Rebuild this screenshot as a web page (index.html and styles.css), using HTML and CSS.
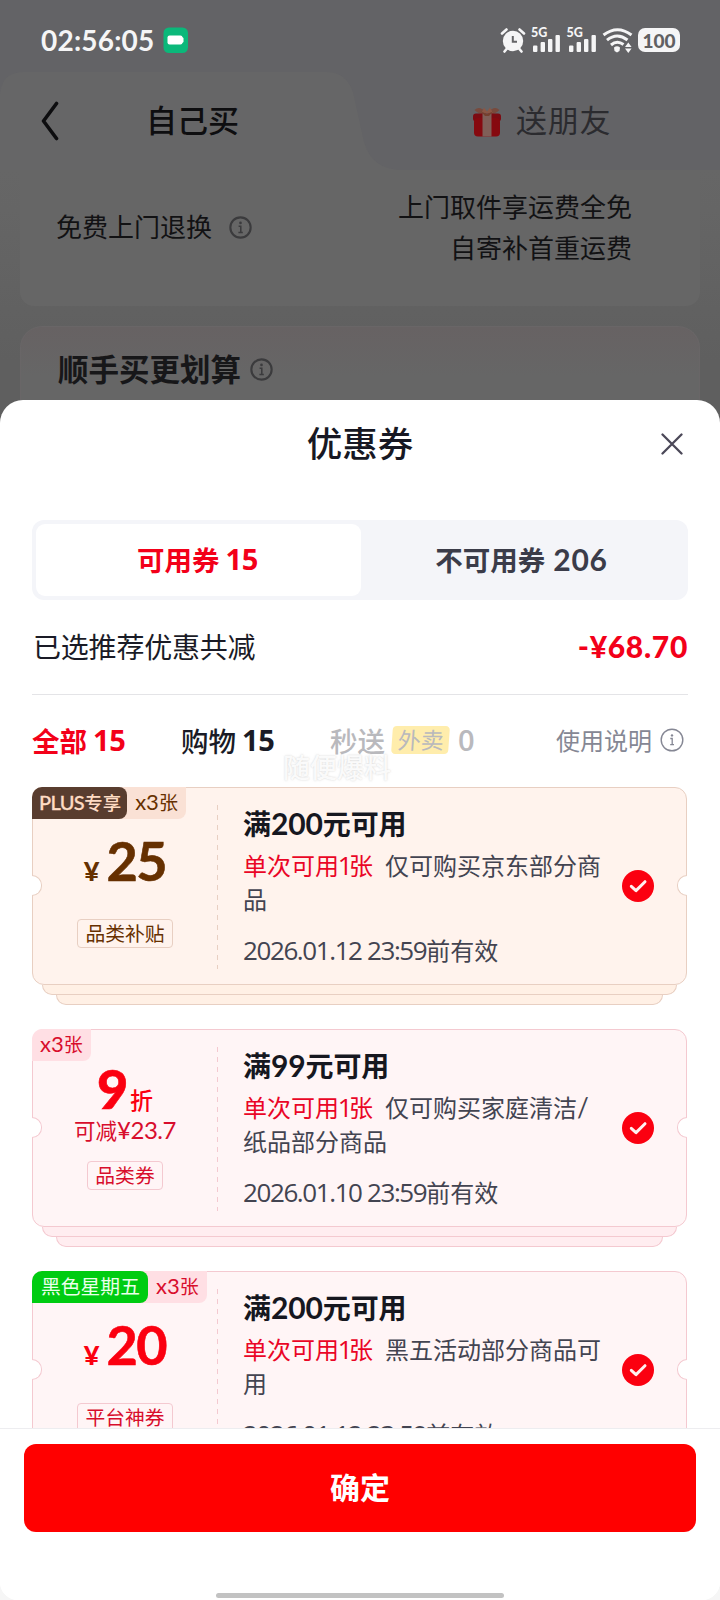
FILE: index.html
```html
<!DOCTYPE html>
<html lang="zh-CN">
<head>
<meta charset="utf-8">
<title>优惠券</title>
<link rel="stylesheet" href="styles.css">
</head>
<body>
<svg class="defs" width="0" height="0">
  <symbol id="info" viewBox="0 0 24 24"><circle cx="12" cy="12" r="10.8" fill="none" stroke="currentColor" stroke-width="1.4"/><circle cx="12" cy="7.4" r="1.2" fill="currentColor"/><path d="M10.3 10.5H12.2V16.4M10.2 16.6H14" fill="none" stroke="currentColor" stroke-width="1.3"/></symbol>
  <symbol id="info-bold" viewBox="0 0 24 24"><circle cx="12" cy="12" r="10.6" fill="none" stroke="currentColor" stroke-width="2.2"/><circle cx="12" cy="7.2" r="1.4" fill="currentColor"/><path d="M10 10.8H12.3V17M9.8 17.2H14.4" fill="none" stroke="currentColor" stroke-width="1.6"/></symbol>
  <symbol id="signal" viewBox="0 0 28 26"><g fill="currentColor"><rect x="1" y="18.5" width="4.4" height="6.5" rx="1"/><rect x="8.6" y="15" width="4.4" height="10" rx="1"/><rect x="16" y="12" width="4.4" height="13" rx="1"/><rect x="23.5" y="8" width="4.4" height="17" rx="1"/></g></symbol>
  <symbol id="check" viewBox="0 0 32 32"><circle cx="16" cy="16" r="16" fill="#fb0010"/><path d="M9.3 16.3L14 20.6L23 11.7" fill="none" stroke="#fff0f0" stroke-width="3" stroke-linecap="round" stroke-linejoin="round"/></symbol>
</svg>
<div class="phone">
  <div class="backdrop">
    <div class="status">
      <span class="n clock">02:56:05</span>
      <svg class="rec" width="26" height="27" viewBox="0 0 26 27"><rect x=".5" y=".5" width="24.5" height="25.5" rx="5.5" fill="#0bb87a"/><rect x="4.5" y="8.5" width="15" height="9" rx="2" fill="#fff"/><path d="M19 10l1.5 1v4L19 16z" fill="#fff"/></svg>
      <span class="spacer"></span>
      <svg class="alarm" width="26" height="26" viewBox="0 0 26 26"><circle cx="13" cy="14" r="10.2" fill="currentColor"/><path d="M2 6.5L6.5 2.5M19.5 2.5L24 6.5M4.5 24.5L7 21.5M19 21.5L21.5 24.5" fill="none" stroke="currentColor" stroke-width="2.6" stroke-linecap="round"/><path d="M12.8 9V14.8H17" fill="none" stroke="#646467" stroke-width="2"/></svg>
      <span class="net"><span class="n net-label">5G</span><svg width="28" height="26"><use href="#signal"/></svg></span>
      <span class="net"><span class="n net-label">5G</span><svg width="28" height="26"><use href="#signal"/></svg></span>
      <svg class="wifi" width="31" height="26" viewBox="0 0 31 26"><g fill="none" stroke="currentColor" stroke-width="3"><path d="M1.5 8Q15.5-2.5 29.5 8"/><path d="M5 13.2Q15 5 25.5 13"/><path d="M9 18Q15 12.8 21.5 17.5"/></g><path d="M12 20.5Q15 18 18 20.5L17.5 24L15 25.5L12.5 24Z" fill="currentColor"/><path d="M26.3 15.5L29.6 20H23Z M23 21.5H29.6L26.3 26Z" fill="currentColor"/></svg>
      <span class="battery"><span class="n">100</span></span>
    </div>
    <div class="tabs">
      <svg class="tab-shape" width="720" height="98" viewBox="0 0 720 98"><path d="M0 98V22Q2 0 24 0H326Q346 0 353 20L364 70Q372 98 402 98Z" fill="#666667"/></svg>
      <svg class="back" width="18" height="40" viewBox="0 0 18 40"><path d="M15.5 2.5L2.5 20L15.5 37.5" fill="none" stroke="#0d0d0f" stroke-width="3.6" stroke-linecap="round" stroke-linejoin="round"/></svg>
      <span class="tab-self">自己买</span>
      <svg class="gift" width="30" height="31" viewBox="0 0 30 31"><path d="M14 9Q6 8 2.5 4Q8-1 14 7ZM16 9Q24 8 27.500 4Q22-1 16 7Z" fill="#784a3d"/><path d="M9.500 7L12 1.500L15 5.500L18 1.500L21 7Z" fill="#8b5745"/><rect x="1" y="7.500" width="28" height="8" rx="3" fill="#7c0b12"/><rect x="2" y="12" width="26" height="18.500" rx="4" fill="#86090f"/><rect x="10.500" y="7.500" width="9" height="23" fill="#805f58"/><path d="M9 5.500L15 8L21 5.500L17 10H13Z" fill="#74402f"/></svg>
      <span class="tab-friend">送朋友</span>
    </div>
    <div class="page">
      <div class="ship">
        <span class="ship-label">免费上门退换</span>
        <svg class="info-dim" width="23" height="23"><use href="#info-bold"/></svg>
        <div class="ship-note">上门取件享运费全免<br>自寄补首重运费</div>
      </div>
      <div class="deal"><span class="deal-label">顺手买更划算</span><svg class="info-dim" width="23" height="23"><use href="#info-bold"/></svg></div>
    </div>
  </div>

  <div class="sheet">
    <header class="sheet-head">
      <h1>优惠券</h1>
      <svg class="close" width="22" height="22" viewBox="0 0 22 22"><path d="M1.5 1.5L20.5 20.5M20.5 1.5L1.5 20.5" stroke="#4b4858" stroke-width="2.3" stroke-linecap="round"/></svg>
    </header>
    <div class="segment">
      <div class="seg on">可用券<span class="n">15</span></div>
      <div class="seg">不可用券<span class="n">206</span></div>
    </div>
    <div class="total"><span>已选推荐优惠共减</span><span class="n amount">-¥68.70</span></div>
    <div class="filters">
      <span class="filter f-all">全部<span class="n">15</span></span>
      <span class="filter f-shop">购物<span class="n">15</span></span>
      <span class="filter f-fast">秒送<em>外卖</em><span class="n">0</span></span>
      <span class="help">使用说明</span>
      <svg class="help-icon" width="24" height="24"><use href="#info"/></svg>
      <span class="watermark">随便爆料</span>
    </div>
    <div class="list">
      <article class="coupon plus">
        <div class="card">
          <div class="badges"><span class="badge main"><span class="n">PLUS</span>专享</span><span class="badge count"><span class="n">x3</span>张</span></div>
          <div class="left">
            <div class="price"><span class="n yen">¥</span><span class="n num">25</span></div>
            <span class="tag">品类补贴</span>
          </div>
          <div class="body">
            <h2>满<span class="n">200</span>元可用</h2>
            <p><b>单次可用<span class="n one">1</span>张</b>仅可购买京东部分商品</p>
            <div class="date"><span class="n">2026.01.12 23:59</span>前有效</div>
          </div>
          <svg class="check" width="32" height="32"><use href="#check"/></svg>
          <i class="notch l"></i><i class="notch r"></i>
        </div>
        <div class="stack s1"></div><div class="stack s2"></div>
      </article>
      <article class="coupon">
        <div class="card">
          <div class="badges"><span class="badge count"><span class="n">x3</span>张</span></div>
          <div class="left rate">
            <div class="price"><span class="n num">9</span><span class="unit">折</span></div>
            <div class="save">可减<span class="n">¥23.7</span></div>
            <span class="tag">品类券</span>
          </div>
          <div class="body">
            <h2>满<span class="n">99</span>元可用</h2>
            <p><b>单次可用<span class="n one">1</span>张</b>仅可购买家庭清洁<span class="n">/</span><br>纸品部分商品</p>
            <div class="date"><span class="n">2026.01.10 23:59</span>前有效</div>
          </div>
          <svg class="check" width="32" height="32"><use href="#check"/></svg>
          <i class="notch l"></i><i class="notch r"></i>
        </div>
        <div class="stack s1"></div><div class="stack s2"></div>
      </article>
      <article class="coupon">
        <div class="card">
          <div class="badges"><span class="badge main green">黑色星期五</span><span class="badge count"><span class="n">x3</span>张</span></div>
          <div class="left">
            <div class="price"><span class="n yen">¥</span><span class="n num">20</span></div>
            <span class="tag">平台神券</span>
          </div>
          <div class="body">
            <h2>满<span class="n">200</span>元可用</h2>
            <p><b>单次可用<span class="n one">1</span>张</b>黑五活动部分商品可用</p>
            <div class="date"><span class="n">2026.01.12 23:59</span>前有效</div>
          </div>
          <svg class="check" width="32" height="32"><use href="#check"/></svg>
          <i class="notch l"></i><i class="notch r"></i>
        </div>
        <div class="stack s1"></div><div class="stack s2"></div>
      </article>
    </div>
    <footer class="foot">
      <button class="confirm">确定</button>
      <div class="home"></div>
    </footer>
  </div>
</div>
</body>
</html>
```
FILE: styles.css
```css
* { box-sizing: border-box; margin: 0; padding: 0; }
body { background: #666; font-family: "Noto Sans CJK SC", sans-serif; color: #1a1b26; }
.defs { position: absolute; }
.phone { width: 720px; height: 1600px; overflow: hidden; display: flex; flex-direction: column; background: linear-gradient(#5f5f5f 1000px, #f6f6f6 1000px); }
.n { font-family: Lato, "Liberation Sans", sans-serif; line-height: 1; }
svg { flex: none; display: block; }

.backdrop { height: 400px; flex: none; background: #636366; }
.status { height: 72px; padding: 8px 40px 0 41px; display: flex; align-items: center; color: #f5f5f6; }
.clock { font-size: 28px; font-weight: 700; letter-spacing: 0.2px; width: 122px; white-space: nowrap; }
.spacer { flex: 1; }
.alarm { margin-right: 6px; }
.net { position: relative; margin-right: 7.5px; }
.net-label { position: absolute; left: -1px; top: 0; font-size: 12.5px; font-weight: 900; }
.wifi { margin: 0 5px 0 -1px; }
.battery { width: 42px; height: 24px; border-radius: 7px; background: #f5f5f6; color: #606062; display: flex; align-items: center; justify-content: center; font-size: 19px; font-weight: 900; }

.tabs { position: relative; height: 98px; display: flex; align-items: center; color: #0e0e10; font-size: 31px; font-weight: 500; }
.tab-shape { position: absolute; left: 0; top: 0; }
.back { position: relative; margin-left: 41px; }
.tab-self { position: relative; margin: 0 0 6px 87px; width: 324px; }
.gift { margin-right: 14px; margin-left: 2px; }
.tab-friend { color: #2b2b2f; font-weight: 400; letter-spacing: .8px; margin-bottom: 6px; }

.page { height: 230px; padding: 0 20px; background: linear-gradient(#666, #656565 40px, #5f5f5f 190px); }
.ship { height: 136px; border-radius: 0 0 14px 14px; background: #666; display: flex; padding: 15px 68px 0 36px; font-size: 26px; color: #121214; }
.ship-label { margin-top: 21px; line-height: 40px; }
.ship .info-dim { margin: 31px 0 0 17px; }
.info-dim { color: #3b3b3d; }
.ship-note { margin-left: auto; text-align: right; line-height: 41px; }
.deal { margin-top: 20px; height: 74px; border-radius: 22px 22px 0 0; border: 1px solid #696667; border-bottom: 0; background: linear-gradient(#676263, #666 48px); padding: 12px 37px 0; display: flex; align-items: center; font-size: 30.5px; font-weight: 700; color: #171719; }
.deal-label { margin-bottom: 4px; }
.deal .info-dim { margin-left: 9px; }

.sheet { flex: 1; min-height: 0; background: #fff; border-radius: 23px 23px 18px 18px; display: flex; flex-direction: column; }
.sheet-head { height: 120px; flex: none; display: flex; justify-content: flex-end; padding: 33px 37px 0; }
h1 { flex: 1; margin-left: 22px; margin-top: -14px; line-height: 46px; font-size: 35.5px; font-weight: 500; text-align: center; color: #171823; }
.segment { margin: 0 32px; height: 80px; flex: none; padding: 4px; background: #f4f5f9; border-radius: 12px; display: grid; grid-template-columns: 325px 1fr; }
.seg { display: flex; justify-content: center; align-items: center; font-size: 27.5px; line-height: 40px; font-weight: 700; color: #3b3c49; border-radius: 9px; padding: 0 2px 3px 0; }
.seg .n { font-size: 30px; font-weight: 700; margin-left: 8px; letter-spacing: 0.7px; line-height: 30px; }
.seg.on { background: #fff; color: #f30019; }
.seg.on .n, .filter .n { font-family: "Open Sans", "Noto Sans", sans-serif; font-size: 29px; letter-spacing: -0.4px; margin-left: 6px; }
.total { margin: 0 32px; height: 95px; flex: none; border-bottom: 1px solid #e4e4e7; display: flex; align-items: center; justify-content: space-between; font-size: 28px; padding: 0 0 3px 1px; letter-spacing: -0.2px; }
.amount { color: #f30019; font-size: 30px; font-weight: 900; letter-spacing: 0.7px; }
.filters { height: 92px; flex: none; margin: 0 32px; display: flex; align-items: center; font-size: 27.5px; font-weight: 500; position: relative; padding-bottom: 3px; }
.filter { display: flex; align-items: center; white-space: nowrap; }
.filter .n { font-weight: 700; }
.f-all { color: #f30019; width: 149px; font-weight: 700; }
.f-shop { width: 149px; }
.f-fast { color: #b9b9bd; }
.f-fast em { font-style: normal; font-size: 23px; font-weight: 400; height: 28px; line-height: 26px; padding: 0 5px 0 6px; margin-left: 7px; border-radius: 4px; background: #ffedac; transform: skewX(-4deg); }
.filter em + .n { margin-left: 9px; font-weight: 600; }
.help { margin-left: auto; font-size: 24px; font-weight: 400; color: #858794; }
.help-icon { margin: 1px 4px 0 8px; color: #858794; }
.watermark { position: absolute; left: 251px; top: 52px; font-size: 27px; line-height: 40px; color: #ffffffe0; text-shadow: 0 0 2px #aaa8; }

.list { flex: 1; min-height: 0; overflow: hidden; padding: 0 32px; }
.coupon { --line: #f4c9d0; --bg: #fff5f6; --stack: #ffedf0; --ink: #fb0010; --soft: #d80d2c; height: 242px; width: 655px; }
.coupon.plus { --line: #e8cfc2; --bg: #fff3ed; --stack: #fff0e5; --ink: #663000; --soft: #663000; }
.card { height: 198px; border: 1px solid var(--line); border-radius: 12px; background: var(--bg); position: relative; display: flex; }
.badges { position: absolute; left: -1px; top: -1px; display: flex; height: 32px; font-size: 20px; line-height: 30px; white-space: nowrap; border-radius: 10px 0 8px 0; overflow: hidden; background: #ffdfe4; color: var(--soft); }
.plus .badges { background: #fae1d5; }
.badge { padding: 0 8px; font-size: 19px; }
.badge .n { font-size: 22px; }
.badge.main { background: #593d2f; color: #ffdcc4; border-radius: 0 8px 8px 0; font-weight: 500; font-size: 18.5px; padding: 0 6px 0 7px; }
.badge.main .n { font-size: 20px; letter-spacing: -0.6px; -webkit-text-stroke: .3px currentColor; }
.badge.main.green { background: #0c1; color: #eaffea; font-weight: 400; font-size: 19.8px; padding: 0 8px 0 9px; }
.left { width: 186px; flex: none; display: flex; flex-direction: column; align-items: center; padding: 43px 2px 0 0; position: relative; }
.left::after { content: ""; position: absolute; right: 1px; top: 17px; height: 164px; width: 1px; background: repeating-linear-gradient(var(--line) 0 5px, transparent 5px 10px); }
.price { height: 60px; display: flex; align-items: baseline; color: var(--ink); white-space: nowrap; }
.price .num { font-size: 54px; line-height: 60px; font-weight: 700; letter-spacing: -1.5px; -webkit-text-stroke: .6px currentColor; }
.price .yen { font-size: 27px; font-weight: 900; margin-right: 7px; }
.tag { margin-top: 28px; height: 29px; line-height: 25px; border: 1px solid var(--line); border-radius: 4px; padding: 0 7px; font-size: 19.8px; color: var(--soft); white-space: nowrap; }
.left.rate { padding-top: 29px; }
.rate .num { font-weight: 900; }
.unit { font-size: 23px; line-height: 30px; font-weight: 500; margin-left: 3px; }
.save { height: 20px; line-height: 20px; font-size: 21.5px; color: var(--soft); margin-top: 1px; white-space: nowrap; }
.save .n { font-size: 24px; letter-spacing: -0.5px; line-height: 0; }
.rate .tag { margin-top: 21px; }
.body { flex: 1; padding: 14px 0 0 24px; }
.body .n { line-height: 0; }
h2 { font-size: 28px; line-height: 42px; font-weight: 700; color: #16171f; white-space: nowrap; letter-spacing: -0.1px; }
h2 .n { font-size: 30px; }
p { width: 364px; font-size: 24px; line-height: 34px; color: #434451; margin-top: 4px; height: 68px; }
p b { font-weight: 400; color: #ea0526; margin-right: 12px; }
p .n { font-size: 26px; }
p .one { font-family: "Open Sans", "Noto Sans", sans-serif; letter-spacing: -3.5px; margin-left: -1.3px; }
.date { margin-top: 17px; font-size: 24px; line-height: 34px; color: #434451; white-space: nowrap; }
.date .n { font-family: "Open Sans", "Noto Sans", sans-serif; font-size: 26px; letter-spacing: -1.4px; }
.check { position: absolute; right: 32px; top: 82px; }
.notch { position: absolute; top: 87px; width: 10px; height: 21px; background: #fff; border: 1px solid var(--line); }
.notch.l { left: -1px; border-left: 0; border-radius: 0 11px 11px 0; }
.notch.r { right: -1px; border-right: 0; border-radius: 11px 0 0 11px; }
.stack { height: 10px; border: 1px solid var(--line); border-top: 0; border-radius: 0 0 12px 12px; background: var(--stack); }
.s1 { margin: 0 10px; }
.s2 { margin: 0 24px; }

.foot { height: 172px; flex: none; border-top: 1px solid #ededf0; padding: 15px 24px 0; background: #fff; border-radius: 0 0 18px 18px; display: flex; flex-direction: column; align-items: center; }
.confirm { width: 672px; height: 88px; padding-bottom: 4px; border: 0; border-radius: 12px; background: #f00; color: #fff; font: 700 30px "Noto Sans CJK SC", sans-serif; }
.home { width: 288px; height: 5px; margin-top: 61px; border-radius: 3px; background: #c2c2c2; }
```
